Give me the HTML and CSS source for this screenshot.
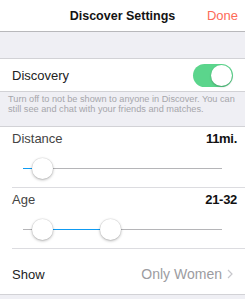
FILE: index.html
```html
<!DOCTYPE html>
<html>
<head>
<meta charset="utf-8">
<link rel="stylesheet" href="styles.css">
</head>
<body>
<div class="nav">
  <div class="title">Discover Settings</div>
  <div class="done">Done</div>
</div>
<div class="spacer"></div>
<div class="group">
  <div class="row toggle-row">
    <span class="label">Discovery</span>
    <span class="toggle"><span class="knob"></span></span>
  </div>
</div>
<div class="footnote">Turn off to not be shown to anyone in Discover. You can still see and chat with your friends and matches.</div>
<div class="group">
  <div class="slider-row">
    <div class="slider-head"><span class="label">Distance</span><span class="val">11mi.</span></div>
    <div class="slider">
      <div class="track"></div>
      <div class="fill" style="left:0;width:9px"></div>
      <div class="thumb" style="left:8.5px"></div>
    </div>
  </div>
  <div class="slider-row">
    <div class="slider-head"><span class="label">Age</span><span class="val">21-32</span></div>
    <div class="slider">
      <div class="track"></div>
      <div class="fill" style="left:19px;width:68px"></div>
      <div class="thumb" style="left:8.5px"></div>
      <div class="thumb" style="left:76.5px"></div>
    </div>
  </div>
  <div class="row show-row">
    <span class="label">Show</span>
    <span class="value">Only Women<svg class="chev" width="6" height="10" viewBox="0 0 6 10"><path d="M1 1l4 4-4 4" fill="none" stroke="#c7c7cc" stroke-width="1.2"/></svg></span>
  </div>
</div>
</body>
</html>
```

FILE: styles.css
```css
html, body {
  margin: 0;
  padding: 0;
}
body {
  background: #efeff4;
  font-family: "Liberation Sans", Arial, sans-serif;
  color: #111;
  width: 245px;
  height: 299px;
  overflow: hidden;
}
.nav {
  height: 31px;
  background: #fff;
  border-bottom: 1px solid #b8b8bb;
  display: flex;
  align-items: center;
  justify-content: center;
  position: relative;
}
.title {
  font-size: 12.5px;
  font-weight: bold;
  color: #141414;
}
.done {
  position: absolute;
  right: 7px;
  top: 8px;
  font-size: 13px;
  color: #fd6a58;
}
.spacer {
  height: 26px;
}
.group {
  background: #fff;
  border-top: 1px solid #d2d2d6;
  border-bottom: 1px solid #d2d2d6;
}
.row {
  display: flex;
  align-items: center;
  justify-content: space-between;
  padding: 0 12px;
}
.label {
  font-size: 13px;
  color: #222;
}
.toggle-row {
  height: 32px;
  padding-right: 12px;
}
.toggle {
  width: 40px;
  height: 23px;
  border-radius: 12px;
  background: #5bd58c;
  display: flex;
  align-items: center;
  justify-content: flex-end;
  padding-right: 1px;
  box-sizing: border-box;
}
.knob {
  width: 21px;
  height: 21px;
  border-radius: 50%;
  background: #fff;
  box-shadow: 0 1px 2px rgba(0,0,0,0.25);
}
.footnote {
  font-size: 9.2px;
  line-height: 9.5px;
  color: #a6a6ab;
  padding: 3px 6px 0 8px;
  height: 34px;
  box-sizing: border-box;
}
.slider-row {
  margin-left: 12px;
  border-bottom: 1px solid #dcdce0;
  height: 61px;
  padding-right: 8px;
  box-sizing: border-box;
}
.slider-head {
  display: flex;
  justify-content: space-between;
  align-items: center;
  height: 22px;
}
.slider-head .label {
  color: #444;
}
.val {
  font-size: 13px;
  font-weight: bold;
  color: #111;
  letter-spacing: -0.3px;
}
.slider {
  position: relative;
  margin: 9px 0 0 11px;
  width: 199px;
  height: 21px;
}
.track {
  position: absolute;
  left: 0;
  right: 0;
  top: 10px;
  height: 1px;
  background: #b5b5b8;
}
.fill {
  position: absolute;
  top: 10px;
  height: 1px;
  background: #0f9bf2;
}
.thumb {
  position: absolute;
  top: 0;
  width: 21px;
  height: 21px;
  border-radius: 50%;
  background: #fff;
  box-shadow: 0 1px 3px rgba(0,0,0,0.3), 0 0 0 0.5px rgba(0,0,0,0.08);
}
.show-row {
  height: 45px;
  padding-top: 5px;
  box-sizing: border-box;
  padding-right: 12px;
}
.value {
  font-size: 14px;
  color: #9c9ca1;
  display: flex;
  align-items: center;
  gap: 5px;
}
.chev {
  display: block;
}
```
